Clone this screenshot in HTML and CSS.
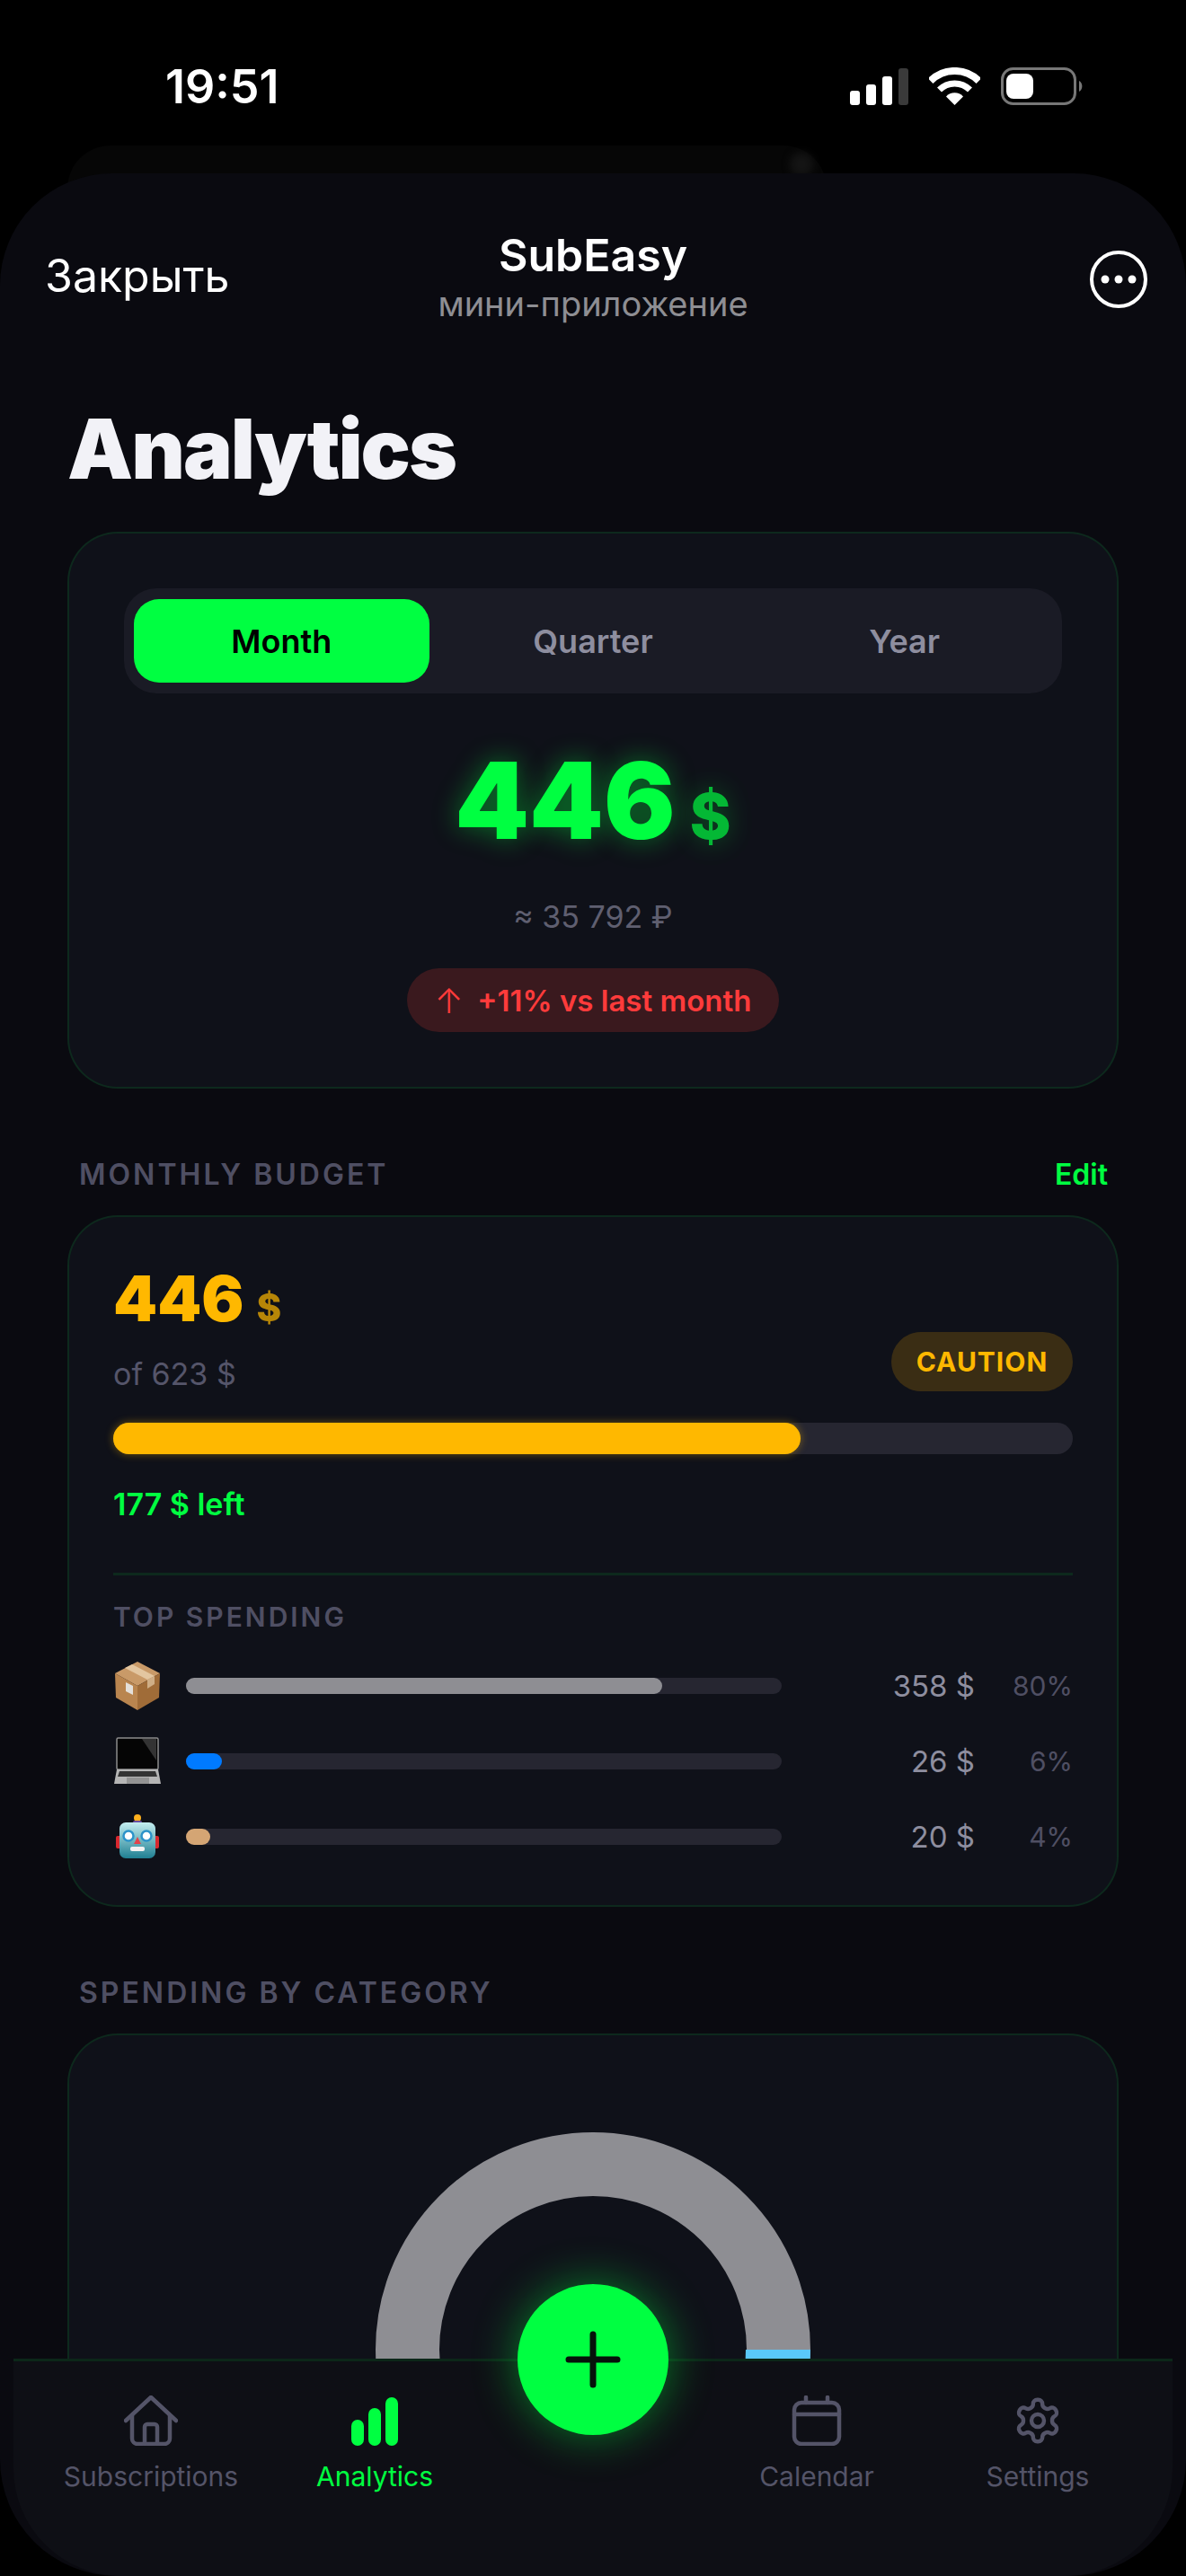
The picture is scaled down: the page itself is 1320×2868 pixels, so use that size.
FILE: index.html
```html
<!DOCTYPE html>
<html lang="en">
<head>
  <meta charset="UTF-8">
  <meta name="viewport" content="width=device-width, initial-scale=1.0">
  <title>SubEasy</title>
  <link rel="stylesheet" href="styles.css">
</head>
<body>
  <div class="status-bar">
    <span class="time">19:51</span>
    <div class="status-icons">
      <div class="signal">
        <span class="sig-1"></span><span class="sig-2"></span><span class="sig-3"></span><span class="sig-4"></span>
      </div>
      <svg class="wifi" width="57" height="42" viewBox="0 0 57 42">
        <path d="M1.6 15.1A38 38 0 0 1 55.4 15.1" fill="none" stroke="#fff" stroke-width="8"/>
        <path d="M11.5 25A24 24 0 0 1 45.5 25" fill="none" stroke="#fff" stroke-width="7"/>
        <path d="M28.5 42L19 32.5A13 13 0 0 1 38 32.5Z" fill="#fff"/>
      </svg>
      <svg class="battery" width="92" height="42" viewBox="0 0 92 42">
        <rect x="1.5" y="1.5" width="81" height="39" rx="12" fill="none" stroke="#777" stroke-width="3"/>
        <rect x="6" y="7" width="30" height="28" rx="8" fill="#fff"/>
        <path d="M87 15a7 7 0 0 1 0 12z" fill="#777"/>
      </svg>
    </div>
  </div>

  <div class="back-sheet"><span class="back-dot"></span></div>

  <div class="sheet">
    <header class="top-nav">
      <span class="close-link">Закрыть</span>
      <div class="app-title">
        <div class="app-name">SubEasy</div>
        <div class="app-sub">мини-приложение</div>
      </div>
      <svg class="more-btn" width="64" height="64" viewBox="0 0 64 64">
        <circle cx="32" cy="32" r="30" fill="none" stroke="#fff" stroke-width="4"/>
        <circle cx="17" cy="32" r="4.5" fill="#fff"/>
        <circle cx="32" cy="32" r="4.5" fill="#fff"/>
        <circle cx="47" cy="32" r="4.5" fill="#fff"/>
      </svg>
    </header>

    <main class="content">
      <h1 class="page-title">Analytics</h1>

      <section class="card total-card">
        <div class="segment">
          <div class="seg-item active">Month</div>
          <div class="seg-item">Quarter</div>
          <div class="seg-item">Year</div>
        </div>
        <div class="total-amount">446<span class="total-cur">$</span></div>
        <div class="total-rub">≈ 35 792 ₽</div>
        <div class="trend-pill"><span class="trend-arrow">↑</span> +11% vs last month</div>
      </section>

      <div class="section-head">
        <span class="section-label">MONTHLY BUDGET</span>
        <span class="edit-link">Edit</span>
      </div>

      <section class="card budget-card">
        <div class="budget-top">
          <div>
            <div class="budget-amount">446<span class="budget-cur">$</span></div>
            <div class="budget-of">of 623 $</div>
          </div>
          <span class="caution-pill">CAUTION</span>
        </div>
        <div class="progress"><div class="progress-fill" style="width: 71.6%"></div></div>
        <div class="budget-left">177 $ left</div>
        <div class="divider"></div>
        <div class="top-label">TOP SPENDING</div>

        <div class="spend-row">
          <svg class="emoji" width="54" height="56" viewBox="0 0 54 56">
            <polygon points="27,1 52,14 27,28 2,14" fill="#c99a68"/>
            <polygon points="2,14 27,28 27,55 3,41" fill="#b9854f"/>
            <polygon points="52,14 27,28 27,55 51,41" fill="#a06c38"/>
            <polygon points="13,8 38,21 46,17 21,4" fill="#e3c6a0"/>
            <polygon points="38,21 46,17 46,26 38,31" fill="#cfae86"/>
            <polygon points="14,24 22,28 22,38 14,34" fill="#e4e0da"/>
          </svg>
          <div class="spend-track"><div class="spend-fill fill-gray" style="width: 80%"></div></div>
          <span class="spend-amount">358 $</span>
          <span class="spend-pct">80%</span>
        </div>

        <div class="spend-row">
          <svg class="emoji" width="54" height="54" viewBox="0 0 54 54">
            <rect x="4" y="1" width="46" height="35" rx="1.5" fill="#050505" stroke="#8c8c8c" stroke-width="1.5"/>
            <polygon points="32,2 48,2 48,26" fill="#333"/>
            <polygon points="4,36 50,36 53,52 1,52" fill="#b5b5b5"/>
            <polygon points="7,38 47,38 49,44 5,44" fill="#333"/>
            <rect x="15" y="45" width="25" height="7" fill="#939393"/>
          </svg>
          <div class="spend-track"><div class="spend-fill fill-blue" style="width: 6%"></div></div>
          <span class="spend-amount">26 $</span>
          <span class="spend-pct">6%</span>
        </div>

        <div class="spend-row">
          <svg class="emoji" width="54" height="50" viewBox="0 0 54 50">
            <defs>
              <linearGradient id="robotFace" x1="0" y1="0" x2="0" y2="1">
                <stop offset="0" stop-color="#c4eef0"/>
                <stop offset="1" stop-color="#1f7f92"/>
              </linearGradient>
            </defs>
            <circle cx="27" cy="4" r="4" fill="#ffb01e"/>
            <rect x="22" y="7" width="10" height="5" rx="2" fill="#6a4fa0"/>
            <rect x="3" y="24" width="6" height="14" rx="2" fill="#d8282f"/>
            <rect x="45" y="24" width="6" height="14" rx="2" fill="#d8282f"/>
            <rect x="7" y="9" width="40" height="40" rx="7" fill="url(#robotFace)"/>
            <circle cx="17" cy="24" r="5.5" fill="#fff" stroke="#2c93c9" stroke-width="2.5"/>
            <circle cx="37" cy="24" r="5.5" fill="#fff" stroke="#2c93c9" stroke-width="2.5"/>
            <polygon points="27,25 31,33 23,33" fill="#e2434b"/>
            <rect x="19" y="36" width="16" height="5" rx="2" fill="#f2f2f2"/>
          </svg>
          <div class="spend-track"><div class="spend-fill fill-tan" style="width: 4%"></div></div>
          <span class="spend-amount">20 $</span>
          <span class="spend-pct">4%</span>
        </div>
      </section>

      <div class="section-head">
        <span class="section-label">SPENDING BY CATEGORY</span>
      </div>

      <section class="card category-card">
        <svg class="donut" width="484" height="484" viewBox="-242 -242 484 484">
          <circle r="206.5" fill="none" stroke="#8e8e93" stroke-width="71"/>
          <!-- slices start at 3 o'clock and go clockwise, only the first ones show above the tab bar -->
          <path d="M242 0L170 0L169.6 11.9L241.4 16.9Z" fill="#5ac8fa"/>
          <path d="M241.4 16.9L169.6 11.9L168.3 23.7L239.6 33.7L236 54L165 38Z" fill="#ff0000"/>
          <path d="M168.3 23.7L239.6 33.7L230 75L160 52Z" fill="#af52de"/>
        </svg>
      </section>
    </main>

    <nav class="tab-bar">
      <div class="tab-item">
        <svg class="tab-icon" width="60" height="56" viewBox="0 0 60 56" fill="none" stroke="#545468" stroke-width="4.5" stroke-linecap="round" stroke-linejoin="round">
          <path d="M2 28L30 2L58 28"/>
          <path d="M9 22V48a6 6 0 0 0 6 6H45a6 6 0 0 0 6-6V22"/>
          <path d="M23 54V35a3 3 0 0 1 3-3h8a3 3 0 0 1 3 3V54"/>
        </svg>
        <span class="tab-label">Subscriptions</span>
      </div>
      <div class="tab-item active">
        <div class="tab-bars">
          <span class="tab-bar-1"></span><span class="tab-bar-2"></span><span class="tab-bar-3"></span>
        </div>
        <span class="tab-label">Analytics</span>
      </div>
      <div class="tab-spacer"></div>
      <div class="tab-item">
        <svg class="tab-icon" width="56" height="56" viewBox="0 0 56 56" fill="none" stroke="#545468" stroke-width="4.5" stroke-linecap="round" stroke-linejoin="round">
          <rect x="3" y="8" width="50" height="46" rx="8"/>
          <path d="M3 21H53"/>
          <path d="M16 2V8"/>
          <path d="M40 2V8"/>
        </svg>
        <span class="tab-label">Calendar</span>
      </div>
      <div class="tab-item">
        <svg class="tab-icon" width="58" height="58" viewBox="0 0 24 24" fill="none" stroke="#545468" stroke-width="1.9" stroke-linecap="round" stroke-linejoin="round">
          <path d="M12.22 2h-.44a2 2 0 0 0-2 2v.18a2 2 0 0 1-1 1.73l-.43.25a2 2 0 0 1-2 0l-.15-.08a2 2 0 0 0-2.73.73l-.22.38a2 2 0 0 0 .73 2.73l.15.1a2 2 0 0 1 1 1.72v.51a2 2 0 0 1-1 1.74l-.15.09a2 2 0 0 0-.73 2.73l.22.38a2 2 0 0 0 2.73.73l.15-.08a2 2 0 0 1 2 0l.43.25a2 2 0 0 1 1 1.73V20a2 2 0 0 0 2 2h.44a2 2 0 0 0 2-2v-.18a2 2 0 0 1 1-1.73l.43-.25a2 2 0 0 1 2 0l.15.08a2 2 0 0 0 2.73-.73l.22-.39a2 2 0 0 0-.73-2.73l-.15-.08a2 2 0 0 1-1-1.74v-.5a2 2 0 0 1 1-1.74l.15-.09a2 2 0 0 0 .73-2.73l-.22-.38a2 2 0 0 0-2.73-.73l-.15.08a2 2 0 0 1-2 0l-.43-.25a2 2 0 0 1-1-1.73V4a2 2 0 0 0-2-2z"/>
          <circle cx="12" cy="12" r="3"/>
        </svg>
        <span class="tab-label">Settings</span>
      </div>
      <div class="fab">
        <svg width="64" height="64" viewBox="0 0 64 64">
          <path d="M32 4V60M5 32H59" fill="none" stroke="#06120b" stroke-width="7" stroke-linecap="round"/>
        </svg>
      </div>
    </nav>
  </div>
</body>
</html>
```

FILE: styles.css
```css
* {
  box-sizing: border-box;
}

html, body {
  margin: 0;
  height: 2868px;
  overflow: hidden;
}

body {
  background: #000;
  color: #fff;
  font-family: "Inter", "Liberation Sans", sans-serif;
  position: relative;
}

/* status bar */
.status-bar {
  height: 193px;
  padding: 75px 122px 0 184px;
  display: flex;
  justify-content: space-between;
  align-items: flex-start;
}

.time {
  font-size: 52px;
  font-weight: 600;
  line-height: 44px;
}

.status-icons {
  display: flex;
  align-items: flex-end;
  gap: 23px;
}

.signal {
  display: flex;
  align-items: flex-end;
  gap: 7px;
  height: 42px;
}

.signal span {
  width: 11px;
  border-radius: 3px;
  background: #fff;
}

.sig-1 { height: 16px; }
.sig-2 { height: 23px; }
.sig-3 { height: 32px; }
.signal .sig-4 { height: 41px; background: #3a3a3a; }

.battery {
  margin-right: -8px;
}

.back-sheet {
  position: absolute;
  top: 162px;
  left: 75px;
  width: 845px;
  height: 60px;
  border-radius: 48px 48px 0 0;
  background: #060606;
}

.back-dot {
  position: absolute;
  top: 8px;
  right: 15px;
  width: 26px;
  height: 26px;
  border-radius: 50%;
  background: #141414;
  filter: blur(4px);
}

/* sheet */
.sheet {
  position: relative;
  height: 2675px;
  border-radius: 125px 125px 130px 130px;
  background: #0a0a10;
  overflow: hidden;
}

.top-nav {
  height: 257px;
  padding: 61px 43px 0;
  display: grid;
  grid-template-columns: 1fr auto 1fr;
  align-items: start;
}

.close-link {
  margin: 22px 0 0 7px;
  font-size: 50px;
  line-height: 62px;
}

.app-title {
  text-align: center;
}

.app-name {
  font-size: 50px;
  font-weight: 600;
  line-height: 60px;
}

.app-sub {
  font-size: 38px;
  line-height: 48px;
  color: #8e8e93;
}

.more-btn {
  justify-self: end;
  margin-top: 25px;
}

.content {
  padding: 0 75px;
}

.page-title {
  margin: 0 0 42px;
  font-size: 92px;
  font-weight: 900;
  line-height: 100px;
  letter-spacing: -2px;
  color: #f2f2f7;
}

.card {
  border: 2px solid rgba(0, 255, 65, 0.1);
  border-radius: 56px;
  background: #0f1119;
}

/* total */
.total-card {
  padding: 61px 61px 61px;
  display: flex;
  flex-direction: column;
  align-items: center;
}

.segment {
  width: 100%;
  height: 117px;
  padding: 12px 11px;
  display: grid;
  grid-template-columns: repeat(3, 1fr);
  gap: 18px;
  border-radius: 36px;
  background: #1a1b25;
}

.seg-item {
  display: flex;
  align-items: center;
  justify-content: center;
  border-radius: 28px;
  font-size: 36px;
  font-weight: 600;
  color: #8e8e9f;
}

.seg-item.active {
  background: #00ff41;
  color: #000;
}

.total-amount {
  margin-top: 59px;
  font-size: 118px;
  font-weight: 900;
  line-height: 120px;
  color: #00ff41;
  text-shadow: 0 0 30px rgba(0, 255, 65, 0.4);
}

.total-cur {
  margin-left: 16px;
  font-size: 70px;
  font-weight: 800;
  opacity: 0.7;
}

.total-rub {
  margin-top: 30px;
  font-size: 34px;
  line-height: 44px;
  color: #5f5f70;
}

.trend-pill {
  margin-top: 35px;
  height: 71px;
  padding: 0 31px;
  display: flex;
  align-items: center;
  gap: 16px;
  border-radius: 36px;
  background: #3a191e;
  font-size: 33px;
  font-weight: 600;
  color: #ff3b3b;
}

.trend-arrow {
  font-size: 38px;
  font-weight: 300;
}

/* section headers */
.section-head {
  margin: 75px 0 26px;
  padding: 0 12px 0 13px;
  height: 40px;
  display: flex;
  justify-content: space-between;
  align-items: center;
}

.section-label {
  font-size: 32px;
  font-weight: 600;
  letter-spacing: 3px;
  color: #4f4f63;
}

.edit-link {
  font-size: 32px;
  font-weight: 600;
  color: #00ff41;
}

/* budget */
.budget-card {
  padding: 51px 49px 46px;
}

.budget-top {
  display: flex;
  justify-content: space-between;
  align-items: flex-end;
}

.budget-amount {
  font-size: 70px;
  font-weight: 900;
  line-height: 80px;
  color: #ffb800;
}

.budget-cur {
  margin-left: 14px;
  font-size: 42px;
  font-weight: 800;
  opacity: 0.7;
}

.budget-of {
  margin-top: 12px;
  font-size: 34px;
  line-height: 44px;
  color: #55556a;
}

.caution-pill {
  margin-bottom: 3px;
  width: 202px;
  height: 66px;
  display: flex;
  align-items: center;
  justify-content: center;
  border-radius: 33px;
  background: #3a2d14;
  font-size: 30px;
  font-weight: 700;
  letter-spacing: 1px;
  color: #ffb800;
}

.progress {
  margin-top: 32px;
  height: 35px;
  border-radius: 18px;
  background: #262631;
}

.progress-fill {
  height: 100%;
  border-radius: 18px;
  background: #ffb800;
  box-shadow: 0 0 10px rgba(255, 184, 0, 0.4);
}

.budget-left {
  margin-top: 34px;
  font-size: 34px;
  font-weight: 600;
  line-height: 44px;
  color: #00ff41;
}

.divider {
  margin-top: 54px;
  height: 3px;
  background: rgba(0, 255, 65, 0.1);
}

.top-label {
  margin: 28px 0 29px;
  font-size: 30px;
  font-weight: 600;
  line-height: 36px;
  letter-spacing: 3px;
  color: #4f4f63;
}

.spend-row {
  height: 60px;
  margin-top: 24px;
  display: grid;
  grid-template-columns: 81px 663px 215px 109px;
  align-items: center;
}

.top-label + .spend-row {
  margin-top: 0;
}

.spend-track {
  height: 18px;
  border-radius: 9px;
  background: #262631;
}

.spend-fill {
  height: 100%;
  border-radius: 9px;
}

.fill-gray { background: #8e8e93; }
.fill-blue { background: #007aff; }
.fill-tan { background: #d4a574; }

.spend-amount {
  text-align: right;
  font-size: 33px;
  color: #8e8e9f;
}

.spend-pct {
  text-align: right;
  font-size: 30px;
  color: #4f4f63;
}

/* category */
.category-card {
  height: 500px;
  padding-top: 108px;
  display: flex;
  justify-content: center;
  align-items: flex-start;
  border-radius: 56px 56px 0 0;
}

/* tab bar */
.tab-bar {
  position: absolute;
  left: 15px;
  right: 15px;
  bottom: 0;
  height: 242px;
  padding: 38px 30px 0;
  display: grid;
  grid-template-columns: 246px 252px 228px 276px 216px;
  align-items: start;
  border-top: 3px solid rgba(0, 255, 65, 0.1);
  border-radius: 0 0 120px 120px;
  background: #0e0f15;
}

.tab-item {
  display: flex;
  flex-direction: column;
  align-items: center;
  gap: 14px;
}

.tab-icon {
  height: 56px;
  display: block;
}

.tab-label {
  font-size: 30px;
  line-height: 40px;
  color: #545468;
}

.tab-item.active .tab-label {
  color: #00ff41;
}

.tab-bars {
  height: 56px;
  display: flex;
  align-items: flex-end;
  gap: 5px;
}

.tab-bars span {
  width: 14px;
  border-radius: 7px;
  background: #00ff41;
}

.tab-bar-1 { height: 29px; }
.tab-bar-2 { height: 42px; }
.tab-bar-3 { height: 54px; }

.fab {
  position: absolute;
  top: -86px;
  left: 561px;
  width: 168px;
  height: 168px;
  display: flex;
  align-items: center;
  justify-content: center;
  border-radius: 50%;
  background: #00ff41;
  box-shadow: 0 0 50px rgba(0, 255, 65, 0.45);
}
```
